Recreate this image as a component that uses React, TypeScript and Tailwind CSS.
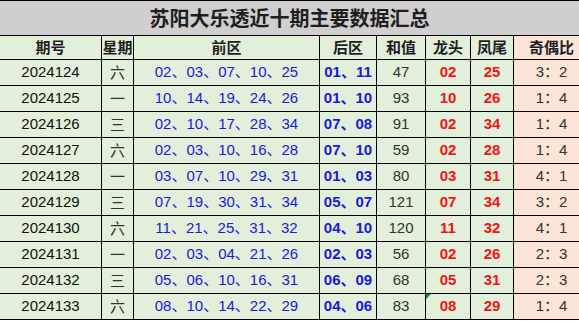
const rows = [
  { no: "2024124", wd: "六", front: "02、03、07、10、25", back: "01、11", sum: "47", head: "02", tail: "25", ratio: "3：2" },
  { no: "2024125", wd: "一", front: "10、14、19、24、26", back: "01、10", sum: "93", head: "10", tail: "26", ratio: "1：4" },
  { no: "2024126", wd: "三", front: "02、10、17、28、34", back: "07、08", sum: "91", head: "02", tail: "34", ratio: "1：4" },
  { no: "2024127", wd: "六", front: "02、03、10、16、28", back: "07、10", sum: "59", head: "02", tail: "28", ratio: "1：4" },
  { no: "2024128", wd: "一", front: "03、07、10、29、31", back: "01、03", sum: "80", head: "03", tail: "31", ratio: "4：1" },
  { no: "2024129", wd: "三", front: "07、19、30、31、34", back: "05、07", sum: "121", head: "07", tail: "34", ratio: "3：2" },
  { no: "2024130", wd: "六", front: "11、21、25、31、32", back: "04、10", sum: "120", head: "11", tail: "32", ratio: "4：1" },
  { no: "2024131", wd: "一", front: "02、03、04、21、26", back: "02、03", sum: "56", head: "02", tail: "26", ratio: "2：3" },
  { no: "2024132", wd: "三", front: "05、06、10、16、31", back: "06、09", sum: "68", head: "05", tail: "31", ratio: "2：3" },
  { no: "2024133", wd: "六", front: "08、10、14、22、29", back: "04、06", sum: "83", head: "08", tail: "29", ratio: "1：4" },
];

const cell = "flex items-center justify-center border-r border-black shrink-0";
const cjk = "font-['Noto_Sans_CJK_SC',sans-serif]";
const num = "font-['Liberation_Sans','Noto_Sans_CJK_SC',sans-serif]";

const App = () => (
  <div className="w-[579px] h-[321px] overflow-hidden bg-white">
    <div className="w-[590px]">
      {/* title */}
      <div className={`h-[36px] border-y border-black bg-[#d0cecf] flex items-center justify-center text-[20px] font-bold text-[#1e1e1e] ${cjk} pr-[11px]`}>
        苏阳大乐透近十期主要数据汇总
      </div>
      {/* header */}
      <div className={`h-[24px] border-b border-black flex bg-[#e2efda] text-[15px] font-bold text-[#1e1e1e] ${cjk}`}>
        <div className={`${cell} w-[102px]`}>期号</div>
        <div className={`${cell} w-[32px]`}>星期</div>
        <div className={`${cell} w-[186px]`}>前区</div>
        <div className={`${cell} w-[57px]`}>后区</div>
        <div className={`${cell} w-[49px]`}>和值</div>
        <div className={`${cell} w-[45px]`}>龙头</div>
        <div className={`${cell} w-[43px]`}>凤尾</div>
        <div className={`${cell} flex-1 bg-[#fce4d6]`}>奇偶比</div>
      </div>
      {rows.map((r, i) => (
        <div key={r.no} className={`h-[26px] border-b border-black flex bg-[#e2efda] text-[15px] ${num}`}>
          <div className={`${cell} w-[102px] text-[#111]`}>{r.no}</div>
          <div className={`${cell} w-[32px] text-[#333] ${cjk}`}>{r.wd}</div>
          <div className={`${cell} w-[186px] text-[#1a1ad8]`}>{r.front}</div>
          <div className={`${cell} w-[57px] text-[#1a1ad8] font-bold`}>{r.back}</div>
          <div className={`${cell} w-[49px] text-[#333]`}>{r.sum}</div>
          <div className={`${cell} w-[45px] text-[#f01414] font-bold relative`}>
            {i === rows.length - 1 && (
              <span className="absolute left-0 top-0 w-0 h-0 border-t-[5px] border-r-[5px] border-t-[#1a8a2a] border-r-transparent" />
            )}
            {r.head}
          </div>
          <div className={`${cell} w-[43px] text-[#f01414] font-bold`}>{r.tail}</div>
          <div className={`${cell} flex-1 bg-[#fce4d6] text-[#333]`}>{r.ratio}</div>
        </div>
      ))}
    </div>
  </div>
);

export default App;
